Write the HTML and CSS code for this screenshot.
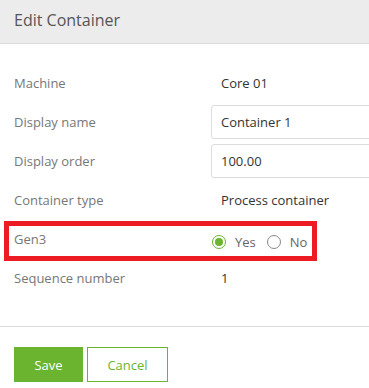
FILE: index.html
```html
<!DOCTYPE html>
<html>
<head>
<meta charset="utf-8">
<link rel="stylesheet" href="styles.css">
</head>
<body>
<div class="page">
  <div class="header"><h1 class="title">Edit Container</h1></div>
  <div class="form">
    <div class="row"><div class="label">Machine</div><div class="value">Core 01</div></div>
    <div class="row"><div class="label">Display name</div><input class="input" type="text" value="Container 1"></div>
    <div class="row"><div class="label">Display order</div><input class="input" type="text" value="100.00"></div>
    <div class="row"><div class="label">Container type</div><div class="value">Process container</div></div>
    <div class="row row-gen3">
      <div class="label">Gen3</div>
      <div class="radios">
        <span class="radio checked"></span><span class="radio-text">Yes</span>
        <span class="radio"></span><span class="radio-text">No</span>
      </div>
      <div class="highlight"></div>
    </div>
    <div class="row"><div class="label">Sequence number</div><div class="value">1</div></div>
  </div>
  <div class="footer">
    <button class="btn btn-save">Save</button>
    <button class="btn btn-cancel">Cancel</button>
  </div>
</div>
</body>
</html>
```

FILE: styles.css
```css
html, body {
  margin: 0;
  padding: 0;
  background: #fff;
}
body {
  font-family: "Open Sans", "Noto Sans", sans-serif;
  font-size: 13px;
  color: #333;
}
.page {
  width: 369px;
  height: 388px;
  overflow: hidden;
}
.header {
  height: 43px;
  background: #ececec;
  border-bottom: 1px solid #dcdcdc;
  padding-left: 14px;
  display: flex;
  align-items: center;
}
.title {
  margin: 0;
  font-size: 16px;
  font-weight: normal;
  color: #555;
  position: relative;
  top: -2px;
}
.form {
  padding: 22px 0 31px 14px;
  display: flex;
  flex-direction: column;
  gap: 5px;
  border-bottom: 1px solid #dcdcdc;
}
.row {
  height: 34px;
  display: grid;
  grid-template-columns: 197px 260px;
  align-items: center;
  position: relative;
}
.label {
  color: #777;
}
.value {
  padding-left: 10px;
  color: #333;
}
.input {
  box-sizing: border-box;
  height: 34px;
  width: 260px;
  border: 1px solid #dcdcdc;
  border-radius: 3px;
  padding: 0 9px;
  font: inherit;
  color: #333;
  outline: none;
}
.radios {
  display: flex;
  align-items: center;
  padding-left: 1px;
  padding-top: 6px;
  color: #666;
}
.radio {
  box-sizing: border-box;
  width: 14px;
  height: 14px;
  border-radius: 50%;
  border: 1px solid #888;
  background: #fff;
  display: flex;
  align-items: center;
  justify-content: center;
  margin-right: 9px;
}
.radio.checked {
  border-color: #6ab42f;
}
.radio.checked::after {
  content: "";
  width: 8px;
  height: 8px;
  border-radius: 50%;
  background: #6ab42f;
}
.radio-text {
  margin-right: 11px;
}
.highlight {
  position: absolute;
  left: -10px;
  top: -1px;
  width: 313px;
  height: 40px;
  box-sizing: border-box;
  border: 5px solid #ed1c24;
  pointer-events: none;
}
.footer {
  padding: 20px 14px;
  display: flex;
  gap: 4px;
}
.btn {
  box-sizing: border-box;
  height: 35px;
  font: inherit;
  font-size: 13px;
  border-radius: 0;
  cursor: pointer;
}
.btn-save {
  width: 69px;
  background: #6ab42f;
  border: 1px solid #6ab42f;
  color: #fff;
}
.btn-cancel {
  width: 81px;
  background: #fff;
  border: 1px solid #6ab42f;
  color: #6ab42f;
}
```
